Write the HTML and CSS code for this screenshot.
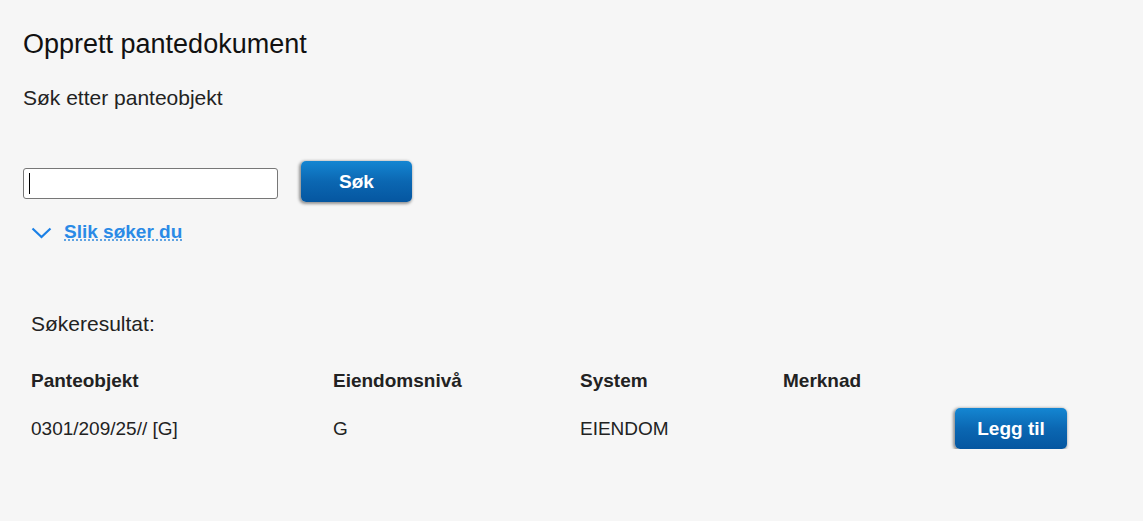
FILE: index.html
```html
<!DOCTYPE html>
<html lang="no">
<head>
<meta charset="utf-8">
<title>Opprett pantedokument</title>
<link rel="stylesheet" href="styles.css">
</head>
<body>
<main class="page">
  <h1 class="title">Opprett pantedokument</h1>
  <p class="subtitle">Søk etter panteobjekt</p>
  <form class="search" onsubmit="return false">
    <input class="search-input" type="text" aria-label="Søk" autofocus>
    <button class="btn btn-search" type="submit">Søk</button>
  </form>
  <a class="help-link" href="#">
    <svg class="chevron" width="21" height="12" viewBox="0 0 21 12" aria-hidden="true"><path d="M1.5 1.5 L10.5 10 L19.5 1.5" fill="none" stroke="#1b80e6" stroke-width="2.2"/></svg>
    <span class="help-text">Slik søker du</span>
  </a>
  <section class="results">
    <p class="results-label">Søkeresultat:</p>
    <table class="results-table">
      <thead>
        <tr>
          <th class="c1">Panteobjekt</th>
          <th class="c2">Eiendomsnivå</th>
          <th class="c3">System</th>
          <th class="c4">Merknad</th>
          <th class="c5"></th>
        </tr>
      </thead>
      <tbody>
        <tr>
          <td>0301/209/25// [G]</td>
          <td>G</td>
          <td>EIENDOM</td>
          <td></td>
          <td><button class="btn btn-add" type="button">Legg til</button></td>
        </tr>
      </tbody>
    </table>
  </section>
</main>
</body>
</html>
```
FILE: styles.css
```css
html, body {
  margin: 0;
  padding: 0;
  background: #f6f6f6;
}
body {
  font-family: "Liberation Sans", Arial, sans-serif;
  color: #222;
}
.page {
  padding: 28px 0 0 23px;
}
.title {
  margin: 0;
  font-size: 27px;
  font-weight: normal;
  line-height: 32px;
  color: #111;
}
.subtitle {
  margin: 26px 0 0;
  font-size: 21px;
  line-height: 24px;
}
.search {
  display: flex;
  align-items: flex-start;
  gap: 23px;
  margin-top: 51px;
}
.search-input {
  box-sizing: border-box;
  width: 255px;
  height: 31px;
  margin-top: 7px;
  border: 1px solid #777;
  border-radius: 3px;
  background: linear-gradient(#000, #000) no-repeat 5px 4px / 1px 21px, #fff;
  padding: 0 6px;
  font: 19px "Liberation Sans", Arial, sans-serif;
  color: #000;
  caret-color: #000;
  outline: none;
}
.btn {
  box-sizing: border-box;
  height: 41px;
  border: none;
  border-radius: 5px;
  background: linear-gradient(#1486d2, #0b67b2 50%, #0556a0);
  color: #fff;
  font: bold 19px "Liberation Sans", Arial, sans-serif;
  box-shadow: -1px 1px 3px 1px rgba(0,0,0,0.4);
  cursor: pointer;
}
.btn-search {
  width: 111px;
}
.btn-add {
  width: 112px;
}
.help-link {
  display: inline-flex;
  align-items: center;
  gap: 12px;
  margin: 19px 0 0 8px;
  text-decoration: none;
  line-height: 22px;
}
.chevron {
  display: block;
  margin-top: 2px;
}
.help-text {
  color: #2a8ae6;
  font-weight: bold;
  font-size: 19px;
  text-decoration: underline;
  text-decoration-style: dotted;
  text-decoration-color: #5a9fe0;
  text-underline-offset: 2px;
}
.results {
  padding-left: 8px;
  margin-top: 69px;
}
.results-label {
  margin: 0;
  font-size: 21px;
  line-height: 24px;
}
.results-table {
  border-collapse: collapse;
  margin-top: 34px;
  font-size: 19px;
  line-height: 22px;
}
.results-table th {
  text-align: left;
  font-weight: bold;
  padding: 0;
  vertical-align: middle;
}
.results-table td {
  padding: 16px 0 0;
  vertical-align: middle;
}
.c1 { width: 302px; }
.c2 { width: 247px; }
.c3 { width: 203px; }
.c4 { width: 172px; }
.c5 { width: 112px; }
```
